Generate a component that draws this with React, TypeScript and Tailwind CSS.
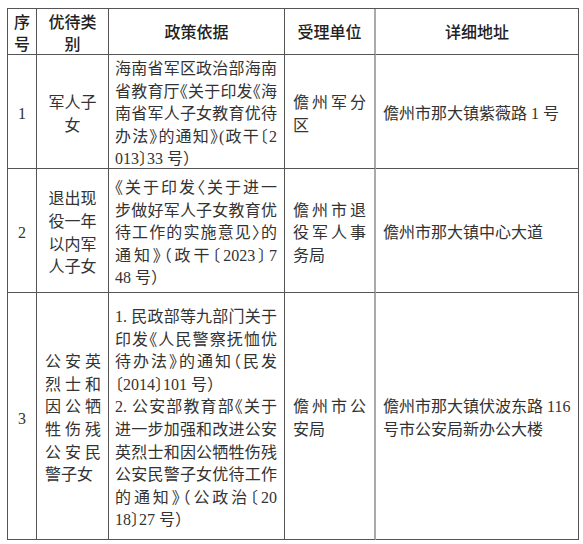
import React from "react";

// 一行文字：非末行两端对齐，末行左对齐
const Line: React.FC<{ text: string; last?: boolean }> = ({ text, last }) => (
  <div
    className={`h-[22.6px] ${last ? "text-left" : "text-justify [text-align-last:justify]"}`}
  >
    {text}
  </div>
);

const Lines: React.FC<{ lines: string[]; justify?: boolean; className?: string }> = ({
  lines,
  justify = true,
  className = "",
}) => (
  <div className={`w-full ${className}`}>
    {lines.map((t, i) =>
      justify ? (
        <Line key={i} text={t} last={i === lines.length - 1} />
      ) : (
        <div key={i} className="h-[22.6px]">
          {t}
        </div>
      )
    )}
  </div>
);

const cell = "border-r border-b border-[#555] flex items-center";
const body = "pt-[6px]";
const unitCell = "border-b border-r-2 border-b-[#555] border-r-[#aaa] flex items-center px-[8px]";
const head = "font-['Noto_Sans_CJK_SC',sans-serif] font-medium text-[#222]";

const rows = [
  {
    no: "1",
    type: { lines: ["军人子", "女"], center: true },
    policy: [
      ["海南省军区政治部海南", "省教育厅《关于印发《海", "南省军人子女教育优待", "办法》的通知》(政干〔2", "013〕33 号）"],
    ],
    unit: ["儋州军分", "区"],
    addr: ["儋州市那大镇紫薇路 1 号"],
  },
  {
    no: "2",
    type: { lines: ["退出现", "役一年", "以内军", "人子女"], center: true },
    policy: [
      ["《关于印发〈关于进一", "步做好军人子女教育优", "待工作的实施意见〉的", "通知》（政干〔2023〕7", "48 号）"],
    ],
    unit: ["儋州市退", "役军人事", "务局"],
    addr: ["儋州市那大镇中心大道"],
  },
  {
    no: "3",
    type: { lines: ["公安英", "烈士和", "因公牺", "牲伤残", "公安民", "警子女"], center: false },
    policy: [
      ["1. 民政部等九部门关于", "印发《人民警察抚恤优", "待办法》的通知（民发", "〔2014〕101 号）"],
      ["2. 公安部教育部《关于", "进一步加强和改进公安", "英烈士和因公牺牲伤残", "公安民警子女优待工作", "的通知》（公政治〔20", "18〕27 号）"],
    ],
    unit: ["儋州市公", "安局"],
    addr: ["儋州市那大镇伏波东路 116", "号市公安局新办公大楼"],
  },
];

export default function App() {
  return (
    <div className="w-[583px] h-[544px] bg-white pt-[8px] pl-[7px] text-[16px] leading-[22.6px] text-[#333] font-['Liberation_Serif','Noto_Sans_CJK_SC',serif]">
      <div className="w-[572px] grid grid-cols-[29px_72px_176px_91px_203px] grid-rows-[46px_114px_124px_247px] border-l border-t border-[#555]">
        {/* 表头 */}
        <div className={`${cell} ${head} justify-center text-center`}>
          <div>
            <div className="h-[22px] leading-[22px]">序</div>
            <div className="h-[22px] leading-[22px]">号</div>
          </div>
        </div>
        <div className={`${cell} ${head} justify-center text-center`}>
          <div>
            <div className="h-[22px] leading-[22px]">优待类</div>
            <div className="h-[22px] leading-[22px]">别</div>
          </div>
        </div>
        <div className={`${cell} ${head} justify-center`}>政策依据</div>
        <div className={`${unitCell} ${head} justify-center`}>受理单位</div>
        <div className={`${cell} ${head} justify-center`}>详细地址</div>

        {rows.map((r) => (
          <React.Fragment key={r.no}>
            <div className={`${cell} ${body} justify-center`}>{r.no}</div>
            <div className={`${cell} ${body} ${r.type.center ? "justify-center text-center" : "pl-[8px] pr-[7px]"}`}>
              <Lines lines={r.type.lines} justify={!r.type.center} />
            </div>
            <div className={`${cell} ${body} pl-[6px] pr-[7px] [font-feature-settings:'halt']`}>
              <div className="w-full">
                {r.policy.map((p, i) => (
                  <Lines key={i} lines={p} />
                ))}
              </div>
            </div>
            <div className={`${unitCell} ${body}`}>
              <Lines lines={r.unit} />
            </div>
            <div className={`${cell} ${body} pl-[7px] pr-[3px]`}>
              <Lines lines={r.addr} justify={false} className="whitespace-nowrap" />
            </div>
          </React.Fragment>
        ))}
      </div>
    </div>
  );
}
